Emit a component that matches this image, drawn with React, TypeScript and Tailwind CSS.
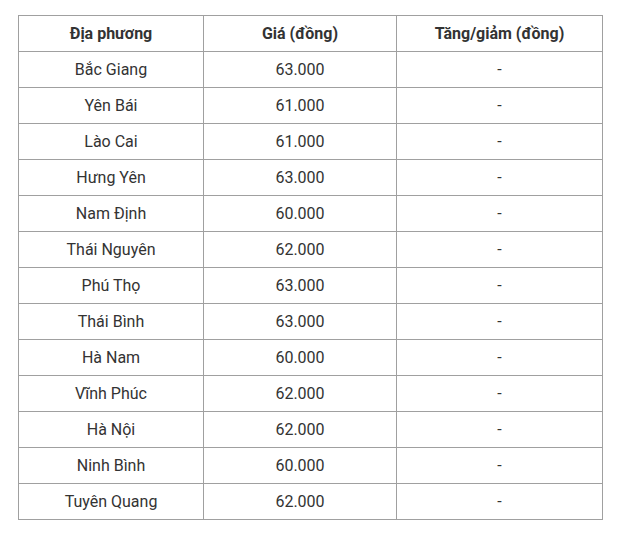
const rows: [string, string][] = [
  ['Bắc Giang', '63.000'],
  ['Yên Bái', '61.000'],
  ['Lào Cai', '61.000'],
  ['Hưng Yên', '63.000'],
  ['Nam Định', '60.000'],
  ['Thái Nguyên', '62.000'],
  ['Phú Thọ', '63.000'],
  ['Thái Bình', '63.000'],
  ['Hà Nam', '60.000'],
  ['Vĩnh Phúc', '62.000'],
  ['Hà Nội', '62.000'],
  ['Ninh Bình', '60.000'],
  ['Tuyên Quang', '62.000'],
];

export default function App() {
  return (
    <div className="min-h-[536px] bg-white pl-[18px] pt-[15px] font-['Roboto',sans-serif] text-[16px] text-[#333]">
      <table className="w-[585px] table-fixed border-collapse">
        <colgroup>
          <col className="w-[185px]" />
          <col className="w-[193px]" />
          <col />
        </colgroup>
        <thead>
          <tr className="h-[36px]">
            <th className="border border-[#a0a0a0] text-center font-bold">Địa phương</th>
            <th className="border border-[#a0a0a0] text-center font-bold">Giá (đồng)</th>
            <th className="border border-[#a0a0a0] text-center font-bold">Tăng/giảm (đồng)</th>
          </tr>
        </thead>
        <tbody>
          {rows.map(([place, price]) => (
            <tr key={place} className="h-[36px]">
              <td className="border border-[#a0a0a0] text-center">{place}</td>
              <td className="border border-[#a0a0a0] text-center">{price}</td>
              <td className="border border-[#a0a0a0] text-center">-</td>
            </tr>
          ))}
        </tbody>
      </table>
    </div>
  );
}
